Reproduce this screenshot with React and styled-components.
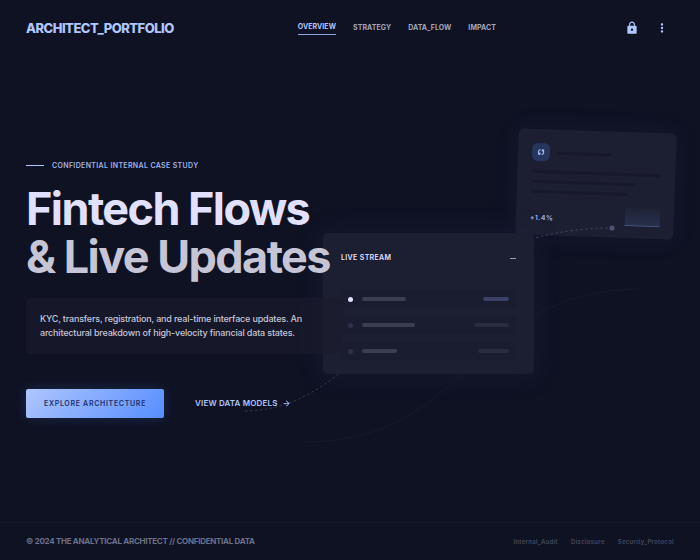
import React from 'react'
import styled, { createGlobalStyle } from 'styled-components'
import { MdLock, MdMoreVert, MdArrowForward } from 'react-icons/md'

const GlobalStyle = createGlobalStyle`
  :root {
    --clr-bg: #0f1223;
    --clr-panel: #1c1e31;
    --clr-primary: #b0c6ff;
    --clr-primary-deep: #568dff;
    --clr-text: #e1e0ff;
    --clr-muted: #c6c5d6;
    --radius: 5px;
  }
  * {
    box-sizing: border-box;
    margin: 0;
    padding: 0;
  }
  body {
    background: var(--clr-bg);
    color: var(--clr-muted);
    font-family: Inter, 'Liberation Sans', sans-serif;
  }
  a {
    color: inherit;
    text-decoration: none;
  }
  button {
    border: none;
    background: none;
    font-family: inherit;
    cursor: pointer;
  }
`

const navLinks = ['Overview', 'Strategy', 'Data_Flow', 'Impact']
const footerLinks = ['Internal_Audit', 'Disclosure', 'Security_Protocol']
const streamRows = [
  { id: 1, name: 44, value: 26, live: true },
  { id: 2, name: 53, value: 35 },
  { id: 3, name: 35, value: 31 },
]

const App = () => {
  return (
    <Page>
      <GlobalStyle />
      <Header>
        <Logo href="#top">ARCHITECT_PORTFOLIO</Logo>
        <Nav>
          {navLinks.map((link, index) => (
            <NavLink key={link} href={`#${link}`} $active={index === 0}>
              {link}
            </NavLink>
          ))}
        </Nav>
        <Actions>
          <IconButton type="button" aria-label="Confidential">
            <MdLock />
          </IconButton>
          <IconButton type="button" aria-label="More">
            <MdMoreVert />
          </IconButton>
        </Actions>
      </Header>
      <Hero>
        <Content>
          <Eyebrow>Confidential internal case study</Eyebrow>
          <Title>
            Fintech Flows
            <span>&amp; Live Updates</span>
          </Title>
          <Summary>
            <p>
              KYC, transfers, registration, and real-time interface updates. An
              architectural breakdown of high-velocity financial data states.
            </p>
          </Summary>
          <ButtonRow>
            <PrimaryButton type="button">Explore Architecture</PrimaryButton>
            <TextLink href="#models">
              View Data Models <MdArrowForward />
            </TextLink>
          </ButtonRow>
        </Content>
        <Scene>
          <ReportCard />
          <StreamCard />
          <Curves />
        </Scene>
      </Hero>
      <Footer>
        <Copyright>
          © 2024 The Analytical Architect // Confidential Data
        </Copyright>
        <FooterNav>
          {footerLinks.map((link) => (
            <a key={link} href={`#${link}`}>
              {link}
            </a>
          ))}
        </FooterNav>
      </Footer>
    </Page>
  )
}

const SyncIcon = () => (
  <svg width="8" height="8" viewBox="0 0 24 24" fill="none">
    <path
      d="M10 4.5C6 5.5 4 8 4 12c0 3 1 5 3 7M14 19.5c4-1 6-3.500 6-7.500 0-3-1-5-3-7"
      stroke="currentColor"
      strokeWidth="3"
    />
    <path d="M2 20h8v-8zM22 4h-8v8z" fill="currentColor" />
  </svg>
)

const ReportCard = () => (
  <Report>
    <ReportTop>
      <Badge>
        <SyncIcon />
      </Badge>
      <Line $width="54px" />
    </ReportTop>
    <Lines>
      <Line $width="100%" />
      <Line $width="80%" />
      <Line $width="75%" />
    </Lines>
    <ReportBottom>
      <strong>+1.4%</strong>
      <MiniChart />
    </ReportBottom>
  </Report>
)

const StreamCard = () => (
  <Stream>
    <StreamTop>
      <h2>Live Stream</h2>
      <Dash />
    </StreamTop>
    <StreamList>
      {streamRows.map(({ id, name, value, live }) => (
        <StreamRow key={id}>
          <Dot $live={live} />
          <Pill $width={name} />
          <Pill $width={value} $tone={live ? 'live' : 'dim'} $end />
        </StreamRow>
      ))}
    </StreamList>
  </Stream>
)

// dashed path joins the two cards, the faint one runs below them
const Curves = () => (
  <svg width="464" height="236" viewBox="0 0 464 236" fill="none">
    <mask
      id="behind"
      maskUnits="userSpaceOnUse"
      x="0"
      y="0"
      width="464"
      height="236"
    >
      <rect width="464" height="236" fill="#fff" />
      <rect x="87" y="10" width="211" height="141" rx="5" fill="#000" />
    </mask>
    <path
      d="M9 188C135 188 175 5 376 5"
      stroke="#b0c6ff"
      strokeOpacity="0.22"
      strokeDasharray="2.5 2.5"
      mask="url(#behind)"
    />
    <path
      d="M70 219C235 219 235 66 404 66"
      stroke="#e1e0ff"
      strokeOpacity="0.04"
      mask="url(#behind)"
    />
    <circle cx="376" cy="5" r="2.6" fill="#4c5371" />
  </svg>
)

const Page = styled.div`
  min-height: 100vh;
  display: flex;
  flex-direction: column;
  overflow: hidden;
`

const Header = styled.header`
  display: flex;
  align-items: center;
  justify-content: space-between;
  padding: 16px 26px;
`

const Logo = styled.a`
  color: var(--clr-primary);
  font-size: 13px;
  line-height: 24px;
  font-weight: 800;
  letter-spacing: -0.04em;
`

const Nav = styled.nav`
  display: flex;
  align-items: center;
  gap: 17px;
`

const NavLink = styled.a`
  color: ${({ $active }) => ($active ? 'var(--clr-primary)' : '#a4a5b8')};
  border-bottom: ${({ $active }) => ($active ? '1px solid #93a6e0' : 'none')};
  padding-bottom: ${({ $active }) => ($active ? '2px' : '0')};
  font-size: 7px;
  line-height: 10px;
  font-weight: 700;
  letter-spacing: 0.01em;
  text-transform: uppercase;
`

const Actions = styled.div`
  display: flex;
  gap: 6px;
`

const IconButton = styled.button`
  width: 24px;
  height: 24px;
  display: grid;
  place-items: center;
  color: var(--clr-primary);
  font-size: 14px;
`

const Hero = styled.main`
  flex: 1;
  position: relative;
  display: flex;
  align-items: center;
  padding: 0 26px;
`

const Content = styled.article`
  position: relative;
  z-index: 1;
`

const Eyebrow = styled.p`
  display: flex;
  align-items: center;
  gap: 8px;
  color: #9fb3ea;
  font-size: 7px;
  line-height: 11px;
  font-weight: 600;
  letter-spacing: 0.05em;
  text-transform: uppercase;
  &::before {
    content: '';
    width: 18px;
    height: 1px;
    background: var(--clr-primary);
  }
`

const Title = styled.h1`
  margin-top: 14px;
  color: var(--clr-text);
  font-size: 45px;
  line-height: 48px;
  font-weight: 700;
  letter-spacing: -0.035em;
  white-space: nowrap;
  span {
    display: block;
    color: var(--clr-muted);
  }
`

const Summary = styled.div`
  margin-top: 17px;
  width: 316px;
  padding: 14px;
  border-radius: var(--radius);
  background: rgba(26, 28, 46, 0.6);
  p {
    max-width: 280px;
    font-size: 9px;
    line-height: 14px;
    font-weight: 500;
    letter-spacing: -0.02em;
  }
`

const ButtonRow = styled.div`
  margin-top: 35px;
  display: flex;
  align-items: center;
  gap: 31px;
`

const PrimaryButton = styled.button`
  padding: 9px 18px;
  border-radius: 2px;
  color: #1d326d;
  background: linear-gradient(
    135deg,
    var(--clr-primary),
    var(--clr-primary-deep)
  );
  box-shadow: 0 0 12px rgba(86, 141, 255, 0.2);
  font-size: 7px;
  line-height: 11px;
  font-weight: 600;
  letter-spacing: 0.1em;
  text-transform: uppercase;
`

const TextLink = styled.a`
  display: flex;
  align-items: center;
  gap: 4px;
  color: var(--clr-primary);
  font-size: 8px;
  line-height: 11px;
  font-weight: 600;
  letter-spacing: 0.02em;
  text-transform: uppercase;
  svg {
    font-size: 9px;
  }
`

const Scene = styled.div`
  position: absolute;
  top: 50%;
  right: 0;
  width: 464px;
  height: 330px;
  transform: translateY(-50%);
  pointer-events: none;
  > svg {
    position: absolute;
    top: 99px;
    left: 0;
  }
`

const Report = styled.section`
  position: absolute;
  top: 7px;
  right: 25px;
  width: 158px;
  height: 106px;
  padding: 14px 14px 12px;
  display: flex;
  flex-direction: column;
  border-radius: var(--radius);
  background: var(--clr-panel);
  box-shadow: 0 0 24px rgba(60, 66, 120, 0.14);
  transform: rotate(2deg);
`

const ReportTop = styled.div`
  display: flex;
  align-items: center;
  gap: 7px;
`

const Badge = styled.span`
  width: 18px;
  height: 18px;
  display: grid;
  place-items: center;
  border-radius: 6px;
  color: var(--clr-primary);
  background: #27365f;
`

const Line = styled.span`
  display: block;
  width: ${({ $width }) => $width};
  height: 3px;
  border-radius: 2px;
  background: #17192b;
`

const Lines = styled.div`
  margin-top: 9px;
  display: grid;
  gap: 7px;
`

const ReportBottom = styled.div`
  margin-top: auto;
  display: flex;
  align-items: flex-end;
  justify-content: space-between;
  strong {
    color: #a3b8ee;
    font-size: 7px;
    line-height: 10px;
    font-weight: 600;
    letter-spacing: 0.05em;
  }
`

const MiniChart = styled.span`
  width: 35px;
  height: 18px;
  border-bottom: 1px solid #46557f;
  background: linear-gradient(#1f2337, #27304a);
`

const Stream = styled.section`
  position: absolute;
  top: 109px;
  left: 87px;
  width: 211px;
  padding: 18px 18px 14px;
  border-radius: var(--radius);
  background: var(--clr-panel);
  box-shadow: 0 0 28px rgba(60, 66, 120, 0.2);
`

const StreamTop = styled.div`
  display: flex;
  align-items: center;
  justify-content: space-between;
  h2 {
    color: var(--clr-text);
    font-size: 7px;
    line-height: 14px;
    font-weight: 600;
    letter-spacing: 0.05em;
    text-transform: uppercase;
  }
`

const Dash = styled.span`
  width: 6px;
  height: 1px;
  background: #9a9bb0;
`

const StreamList = styled.ul`
  margin-top: 25px;
  display: grid;
  gap: 8px;
  list-style: none;
`

const StreamRow = styled.li`
  height: 18px;
  padding: 0 7px;
  display: flex;
  align-items: center;
  gap: 9px;
  border-radius: 2px;
  background: #1a1c2f;
`

const Dot = styled.span`
  width: 5px;
  height: 5px;
  border-radius: 50%;
  background: ${({ $live }) => ($live ? 'var(--clr-text)' : '#303247')};
`

const pillTones = { live: '#3a4164', dim: '#292b3f' }

const Pill = styled.span`
  width: ${({ $width }) => $width}px;
  height: 4px;
  margin-left: ${({ $end }) => ($end ? 'auto' : '0')};
  border-radius: 2px;
  background: ${({ $tone }) => pillTones[$tone] || '#3b3d51'};
`

const Footer = styled.footer`
  display: flex;
  align-items: center;
  justify-content: space-between;
  padding: 13px 26px;
  border-top: 1px solid #16192b;
`

const Copyright = styled.p`
  color: #6a7089;
  font-size: 8px;
  line-height: 11px;
  font-weight: 700;
  letter-spacing: -0.035em;
  text-transform: uppercase;
`

const FooterNav = styled.nav`
  display: flex;
  gap: 13px;
  color: #44485e;
  font-size: 6px;
  line-height: 11px;
  font-weight: 600;
  letter-spacing: 0.05em;
`

export default App
